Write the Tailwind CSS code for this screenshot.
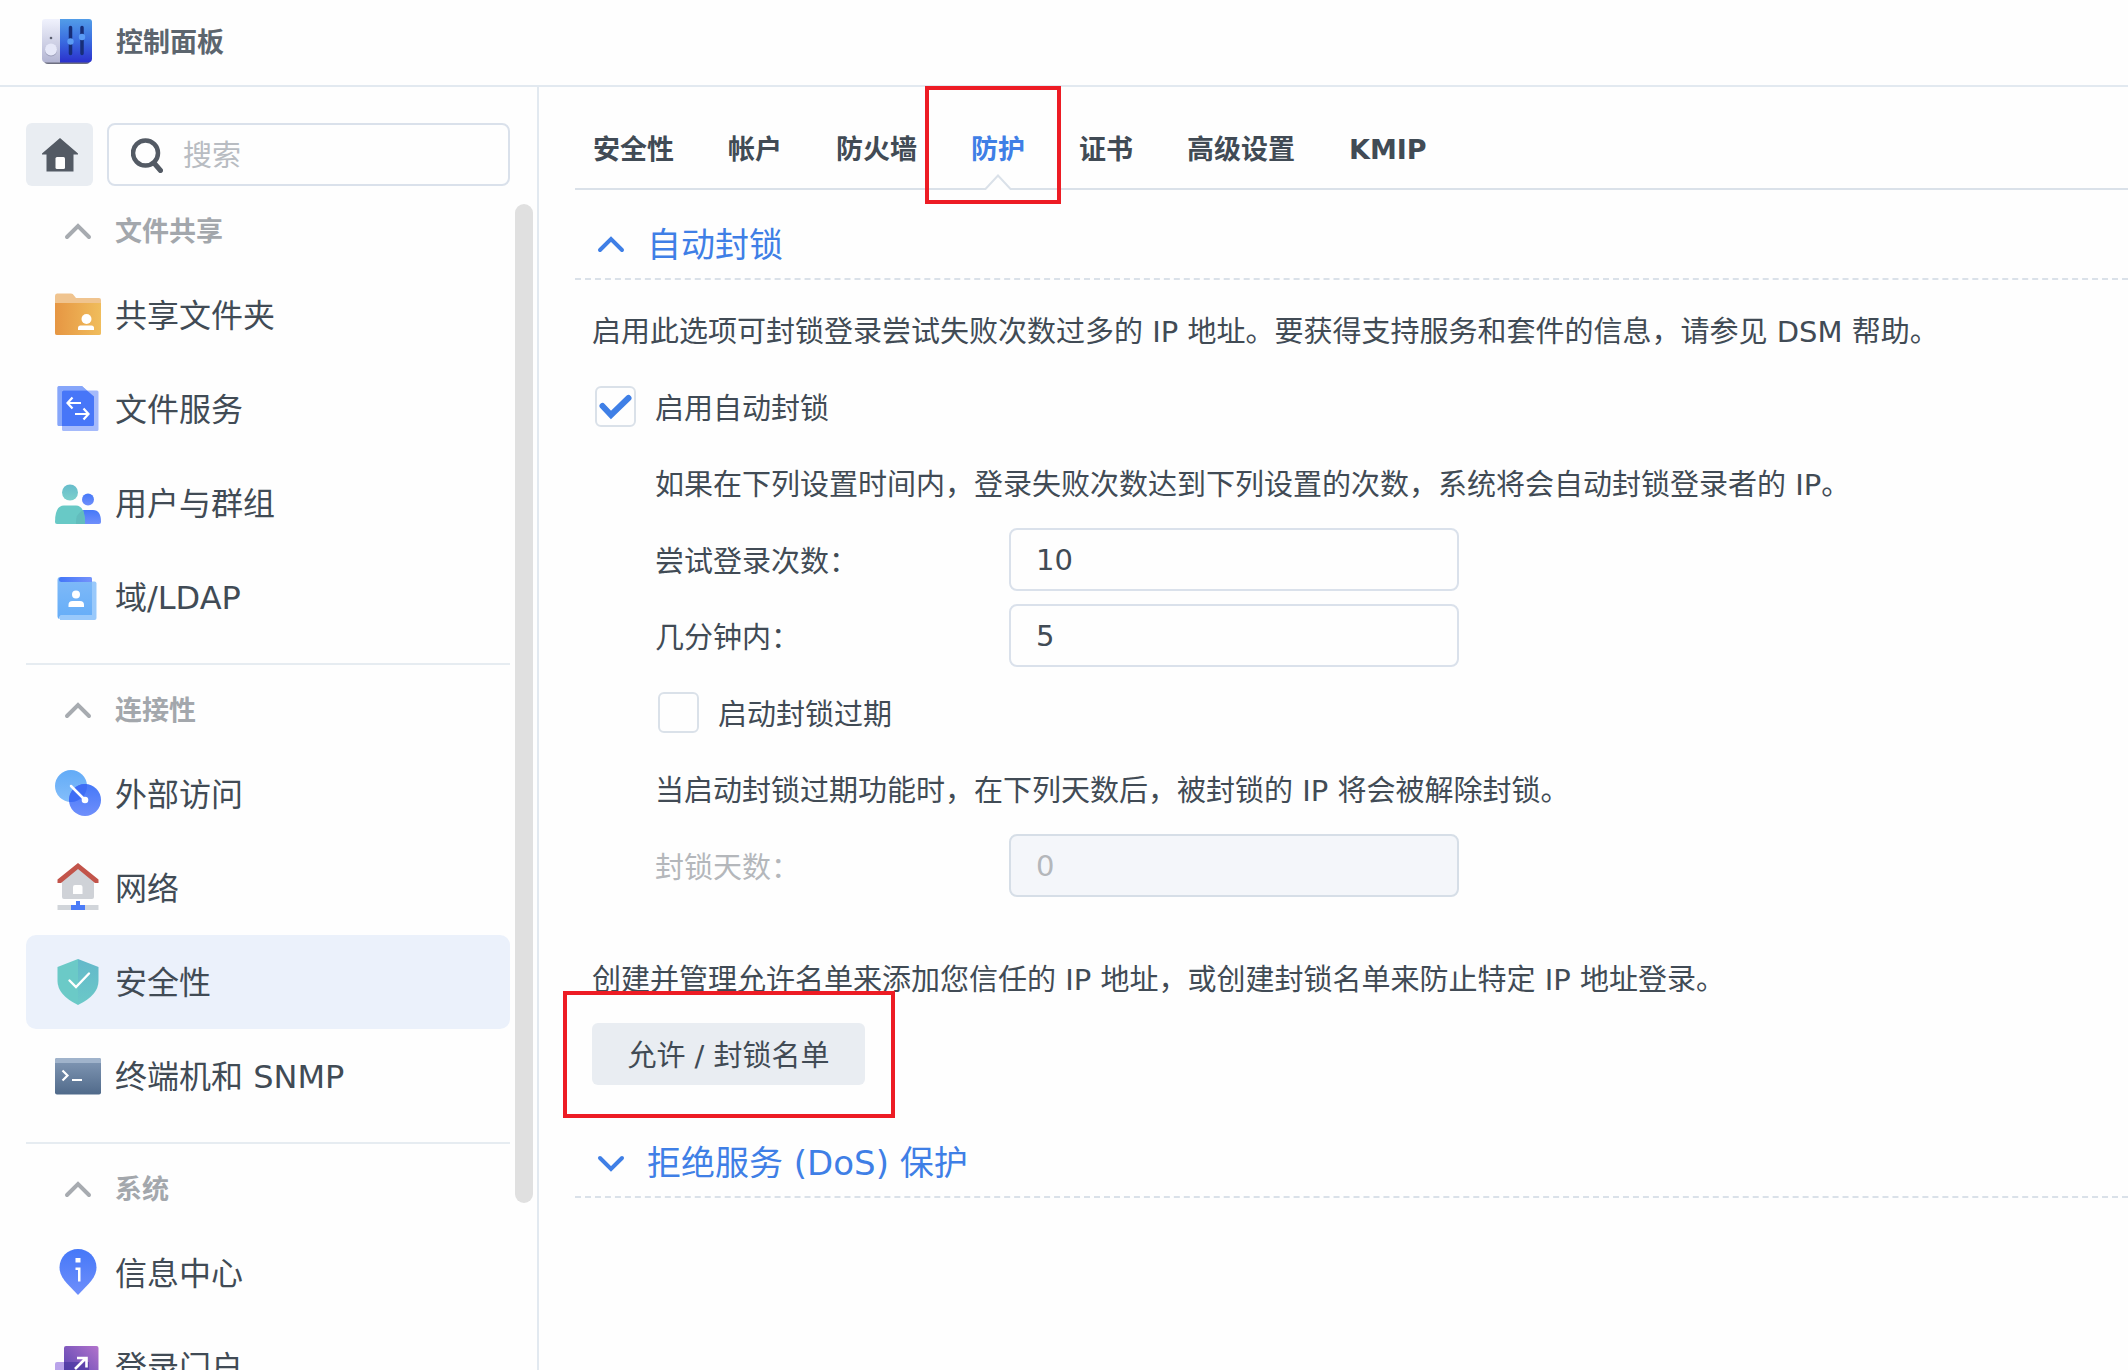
<!DOCTYPE html>
<html lang="zh-CN">
<head>
    <meta charset="UTF-8">
    <meta name="viewport" content="width=device-width, initial-scale=1.0">
    <title>控制面板</title>
    <script src="https://cdn.jsdelivr.net/npm/@tailwindcss/browser@4"></script>
</head>
<body class="flex h-screen flex-col overflow-hidden bg-[#fefefe] font-['DejaVu_Sans','Noto_Sans_CJK_SC',sans-serif] text-[29px] leading-[44px] text-[#414b55]">
    <!-- 标题栏 -->
    <header class="flex h-[87px] shrink-0 items-center gap-6 border-b-2 border-[#e2e9f0] pl-[42px]">
        <svg class="h-[50px] w-[50px]" viewBox="0 1 50 50" aria-hidden="true">
            <defs>
                <linearGradient id="cpLeft" x1="0" y1="0" x2="0" y2="1"><stop offset="0" stop-color="#f0f2fd"/><stop offset="1" stop-color="#b3b5d2"/></linearGradient>
                <linearGradient id="cpRight" x1="0" y1="0" x2="0" y2="1"><stop offset="0" stop-color="#529de8"/><stop offset=".5" stop-color="#3a6ce0"/><stop offset="1" stop-color="#2a30cc"/></linearGradient>
            </defs>
            <rect x="2" y="6" width="46" height="41" rx="4" fill="#6d6f80"/>
            <path d="M3 2h15v43.500H4a4 4 0 0 1-4-4V5a3 3 0 0 1 3-3z" fill="url(#cpLeft)"/>
            <path d="M18 2h29a3 3 0 0 1 3 3v36.500a4 4 0 0 1-4 4H18z" fill="url(#cpRight)"/>
            <circle cx="9" cy="33.500" r="6" fill="#9d9fba"/>
            <circle cx="9" cy="32.500" r="6" fill="#e6e8f8"/>
            <circle cx="9" cy="21" r="1.300" fill="#5b5f70"/>
            <path d="M28.500 10.500v26M40 10.500v26" stroke="#172e78" stroke-width="3.500" stroke-linecap="round"/>
            <circle cx="28.500" cy="24.500" r="3.200" fill="#5b9cf5"/>
            <circle cx="40" cy="20" r="3.200" fill="#5b9cf5"/>
        </svg>
        <h1 class="text-[27px] font-bold text-[#5c656e]">控制面板</h1>
    </header>

    <div class="flex min-h-0 flex-1">
        <!-- 侧边栏 -->
        <aside class="flex w-[539px] shrink-0 flex-col border-r-2 border-[#e2e9f0] pt-9 pl-[26px]">
            <div class="flex h-[63px] shrink-0 gap-[14px] pr-[27px]">
                <button type="button" aria-label="主页" class="flex w-[67px] items-center justify-center rounded-md bg-[#e9edf2]">
                    <svg class="h-9 w-9" viewBox="0 0 36 36" aria-hidden="true"><path d="M18 1 36 16.500V17.500H31.500V34.500H4.500V17.500H0V16.500z" fill="#535a64"/><path d="M13.500 21.500q0-1.500 1.500-1.500h6.500q1.500 0 1.500 1.500v9q0 1.500-1.500 1.500H15q-1.500 0-1.500-1.500z" fill="#fefefe"/></svg>
                </button>
                <label class="flex min-w-0 flex-1 items-center gap-5 rounded-lg border-2 border-[#dae1eb] pl-[22px]">
                    <svg class="h-9 w-8 shrink-0" viewBox="0 0 32 36" fill="none" stroke="#535a64" aria-hidden="true"><circle cx="14.500" cy="16" r="12.500" stroke-width="4.500"/><path d="M23 26l6.500 7.500" stroke-width="5" stroke-linecap="round"/></svg>
                    <input type="search" placeholder="搜索" aria-label="搜索" class="min-w-0 flex-1 bg-transparent pt-[2px] outline-none placeholder:text-[#b8bcc2]">
                </label>
            </div>
            <div class="flex min-h-0 flex-1 gap-[5px]">
                <nav class="flex w-[484px] flex-col overflow-hidden text-[32px]">
                    <section class="mb-[19px] shrink-0">
                        <h2 class="flex h-[82px] items-center gap-[23px] pt-[10px] pl-[38px] text-[27px] font-bold text-[#a3a7ac]">
                            <svg class="h-5 w-7" viewBox="0 0 28 20" fill="none" stroke="#a7abb0" stroke-width="4" stroke-linecap="round" aria-hidden="true"><path d="M3 15 14 4l11 11"/></svg>文件共享
                        </h2>
                        <a href="#" class="flex h-[94px] items-center gap-[14px] rounded-[10px] px-[29px]">
                            <svg class="h-[46px] w-[46px] overflow-visible" viewBox="0 0 46 46" aria-hidden="true">
                                <defs><linearGradient id="folder"><stop offset="0" stop-color="#e69643"/><stop offset="1" stop-color="#f0bd5c"/></linearGradient></defs>
                                <path d="M2 1.500h14q2 0 3 2l2 2.500h23q2 0 2 2v33q0 2-2 2H2q-2 0-2-2v-37q0-2.500 2-2.500z" fill="#f0c48f"/>
                                <path d="M0 11h46v30q0 2-2 2H2q-2 0-2-2z" fill="url(#folder)"/>
                                <circle cx="31.500" cy="27" r="5" fill="#fff"/><path d="M23 38v-2q0-2.500 2.500-2.500h11q2.500 0 2.500 2.500v2z" fill="#fff"/>
                            </svg>
                            <span class="pt-[2px]">共享文件夹</span>
                        </a>
                        <a href="#" class="flex h-[94px] items-center gap-[14px] rounded-[10px] px-[29px]">
                            <svg class="h-[46px] w-[46px] overflow-visible" viewBox="0 0 46 46" aria-hidden="true">
                                <path d="M4 0h23l5 4.500h10q1.500 0 1.500 1.500v37.500q0 1.500-1.500 1.500H8.500Q7 45 7 43.500V40H4q-1.500 0-1.500-1.500v-37Q2.500 0 4 0z" fill="#a5bafb"/>
                                <path d="M4 0h23l5 4.500H7V40H4q-1.500 0-1.500-1.500v-37Q2.500 0 4 0z" fill="#86a6fa"/>
                                <path d="M7 6q0-1.500 1.500-1.500H32l7 6V38.500q0 1.500-1.500 1.500H7z" fill="#4776f8"/>
                                <path d="M26 17H12.500m5-5.500-5 5.500 5 5.500M20 28h13.500m-5-5.500 5 5.500-5 5.500" fill="none" stroke="#fff" stroke-width="2.200"/>
                            </svg>
                            <span class="pt-[2px]">文件服务</span>
                        </a>
                        <a href="#" class="flex h-[94px] items-center gap-[14px] rounded-[10px] px-[29px]">
                            <svg class="h-[46px] w-[46px] overflow-visible" viewBox="0 0 46 46" aria-hidden="true">
                                <defs><linearGradient id="head" x1="0" y1="0" x2="0" y2="1"><stop offset="0" stop-color="#66bccb"/><stop offset="1" stop-color="#7dd0cc"/></linearGradient><linearGradient id="user" x1="0" y1="0" x2="0" y2="1"><stop offset="0" stop-color="#4578f8"/><stop offset="1" stop-color="#6f8ffb"/></linearGradient></defs>
                                <circle cx="33" cy="19.500" r="6" fill="url(#user)"/>
                                <path d="M20 42q0-12 9-12h9q8 0 8 12 0 2-2 2H20z" fill="url(#user)"/>
                                <circle cx="15" cy="12.500" r="8" fill="url(#head)"/>
                                <path d="M0 42q0-16.500 9-16.500h12Q30 25.500 30 44H2q-2 0-2-2z" fill="#68c9c6"/>
                                <path d="M21 44q-1-10 7-14 2 5 2 14z" fill="#62bdbd"/>
                            </svg>
                            <span class="pt-[2px]">用户与群组</span>
                        </a>
                        <a href="#" class="flex h-[94px] items-center gap-[14px] rounded-[10px] px-[29px]">
                            <svg class="h-[46px] w-[46px] overflow-visible" viewBox="0 0 46 46" aria-hidden="true">
                                <defs><linearGradient id="book" x1="0" y1="0" x2="0" y2="1"><stop offset="0" stop-color="#80baf8"/><stop offset="1" stop-color="#65adf8"/></linearGradient><linearGradient id="strip"><stop offset="0" stop-color="#4376f8"/><stop offset="1" stop-color="#7592fb"/></linearGradient></defs>
                                <path d="M5 7.500h34.500q2 0 2 2V44q0 2-2 2H5z" fill="#99c9fb"/>
                                <path d="M2.500 6q0-3 3-3H35q2 0 2 2v36H6q-1.500 0-1.500 4-2-.5-2-2.500z" fill="url(#book)"/>
                                <path d="M6.500 3H35q2 0 2 2v3H6.500a2.500 2.500 0 0 1 0-5z" fill="url(#strip)"/>
                                <circle cx="21" cy="20.500" r="4" fill="#fff"/><path d="M13.500 33v-2q0-4 4-4H25q4 0 4 4v2z" fill="#fff"/>
                            </svg>
                            <span class="pt-[2px]">域/LDAP</span>
                        </a>
                    </section>
                    <section class="mb-[19px] shrink-0 border-t-2 border-[#e6ecf1]">
                        <h2 class="flex h-[82px] items-center gap-[23px] pt-[10px] pl-[38px] text-[27px] font-bold text-[#a3a7ac]">
                            <svg class="h-5 w-7" viewBox="0 0 28 20" fill="none" stroke="#a7abb0" stroke-width="4" stroke-linecap="round" aria-hidden="true"><path d="M3 15 14 4l11 11"/></svg>连接性
                        </h2>
                        <a href="#" class="flex h-[94px] items-center gap-[14px] rounded-[10px] px-[29px]">
                            <svg class="h-[46px] w-[46px] overflow-visible" viewBox="0 0 46 46" aria-hidden="true">
                                <defs><linearGradient id="sky" x1="0" y1="0" x2="0" y2="1"><stop offset="0" stop-color="#62abf7"/><stop offset="1" stop-color="#84befa"/></linearGradient><clipPath id="lens"><circle cx="16" cy="15" r="16"/></clipPath></defs>
                                <circle cx="16" cy="15" r="16" fill="url(#sky)"/>
                                <circle cx="30" cy="29" r="16" fill="url(#user)"/>
                                <circle cx="30" cy="29" r="16" fill="#3e6df5" clip-path="url(#lens)"/>
                                <path d="m16 15 14 14" stroke="#fff" stroke-width="2.500" stroke-linecap="round"/><circle cx="30" cy="29" r="3.300" fill="#fff"/>
                            </svg>
                            <span class="pt-[2px]">外部访问</span>
                        </a>
                        <a href="#" class="flex h-[94px] items-center gap-[14px] rounded-[10px] px-[29px]">
                            <svg class="h-[46px] w-[46px] overflow-visible" viewBox="0 0 46 46" aria-hidden="true">
                                <path fill-rule="evenodd" d="M23 3 39 16v16q0 2-2 2H9q-2 0-2-2V16zM18 22v7h9.500v-7q0-2-2-2H20q-2 0-2 2z" fill="#cfd2d7"/>
                                <path d="M23-2 43.500 14.500V18H40L23 4 6 18H2.500v-3.500z" fill="#c2544a"/>
                                <path d="M2.500 40h41v5h-41z" fill="#d1d5da"/><path d="M21 36h4v4h5v5H16v-5h5z" fill="#4a7bf7"/>
                            </svg>
                            <span class="pt-[2px]">网络</span>
                        </a>
                        <a href="#" aria-current="page" class="flex h-[94px] items-center gap-[14px] rounded-[10px] bg-[#ebf1fb] px-[29px]">
                            <svg class="h-[46px] w-[46px] overflow-visible" viewBox="0 0 46 46" aria-hidden="true">
                                <defs><linearGradient id="shield" x1="0" y1="0" x2="0" y2="1"><stop offset="0" stop-color="#63b8ca"/><stop offset="1" stop-color="#6bc9c8"/></linearGradient></defs>
                                <path d="M23 0v46Q2.500 36 2.500 22V8z" fill="#6bcac7"/>
                                <path d="M23 0v46q20.500-10 20.500-24V8z" fill="url(#shield)"/>
                                <path d="m14.500 21.500 6.500 6.500 13-13.500" fill="none" stroke="#fff" stroke-width="2.400" stroke-linecap="round"/>
                            </svg>
                            <span class="pt-[2px]">安全性</span>
                        </a>
                        <a href="#" class="flex h-[94px] items-center gap-[14px] rounded-[10px] px-[29px]">
                            <svg class="h-[46px] w-[46px] overflow-visible" viewBox="0 0 46 46" aria-hidden="true">
                                <defs><linearGradient id="term" x1="0" y1="0" x2="0" y2="1"><stop offset="0" stop-color="#8399b6"/><stop offset="1" stop-color="#506a8a"/></linearGradient></defs>
                                <rect y="5" width="46" height="36.500" rx="2" fill="url(#term)"/>
                                <path d="M0 10V7q0-2 2-2h42q2 0 2 2v3z" fill="#a0b3cb"/>
                                <path d="m7.500 17.500 5 5-5 5M17 27h10" fill="none" stroke="#fff" stroke-width="2.200"/>
                            </svg>
                            <span class="pt-[2px]">终端机和 SNMP</span>
                        </a>
                    </section>
                    <section class="shrink-0 border-t-2 border-[#e6ecf1]">
                        <h2 class="flex h-[82px] items-center gap-[23px] pt-[10px] pl-[38px] text-[27px] font-bold text-[#a3a7ac]">
                            <svg class="h-5 w-7" viewBox="0 0 28 20" fill="none" stroke="#a7abb0" stroke-width="4" stroke-linecap="round" aria-hidden="true"><path d="M3 15 14 4l11 11"/></svg>系统
                        </h2>
                        <a href="#" class="flex h-[94px] items-center gap-[14px] rounded-[10px] px-[29px]">
                            <svg class="h-[46px] w-[46px] overflow-visible" viewBox="0 0 46 46" aria-hidden="true">
                                <path d="M23-1C33-1 41.500 7 41.500 17.500 41.500 24 38 29 34 33.500L23 45 12 33.500C8 29 4.500 24 4.500 17.500 4.500 7 13-1 23-1z" fill="url(#user)"/>
                                <path d="M20.500 8h5v4.500h-5zM20.500 17.500h5v14H23V20h-2.500z" fill="#fff"/>
                            </svg>
                            <span class="pt-[2px]">信息中心</span>
                        </a>
                        <a href="#" class="flex h-[94px] items-center gap-[14px] rounded-[10px] px-[29px]">
                            <svg class="h-[46px] w-[46px] overflow-visible" viewBox="0 0 46 46" aria-hidden="true">
                                <defs><linearGradient id="portal" x1="0" y1="1" x2="1" y2="0"><stop offset="0" stop-color="#4f3fae"/><stop offset="1" stop-color="#b273cc"/></linearGradient></defs>
                                <rect y="18" width="34" height="28" rx="2" fill="#b9a3ea"/>
                                <rect x="9" y="2" width="34.500" height="36" rx="2" fill="url(#portal)"/>
                                <path d="M9 18h25v20H11q-2 0-2-2z" fill="#46339f" opacity=".6"/>
                                <path d="m20 25 11-11M22 14h9.500v9.500" fill="none" stroke="#fff" stroke-width="2.600"/>
                            </svg>
                            <span class="pt-[2px]">登录门户</span>
                        </a>
                    </section>
                </nav>
                <!-- 滚动条 -->
                <div class="mt-[18px] h-[999px] w-[18px] rounded-full bg-[#e0e0e0]"></div>
            </div>
        </aside>

        <!-- 内容区 -->
        <main class="min-w-0 flex-1 pl-9">
            <div role="tablist" class="flex h-[103px] gap-[54px] border-b-2 border-[#dae1e9] pl-[18px] text-[27px] font-bold">
                <button type="button" role="tab" class="pt-6">安全性</button>
                <button type="button" role="tab" class="pt-6">帐户</button>
                <button type="button" role="tab" class="pt-6">防火墙</button>
                <button type="button" role="tab" aria-selected="true" class="relative pt-6 text-[#3f7fe6]">防护
                    <svg class="absolute -bottom-[2px] left-1/2 h-4 w-7 -translate-x-1/2" viewBox="0 0 28 16" aria-hidden="true"><path d="M1 14h26v2H1z" fill="#fefefe"/><path d="M0 15h1.500L14 1.500 26.500 15H28" fill="#fefefe" stroke="#dae1e9" stroke-width="2"/></svg>
                    <span class="absolute -top-px -right-9 -bottom-4 -left-[46px] border-4 border-[#ed1c24]"></span>
                </button>
                <button type="button" role="tab" class="pt-6">证书</button>
                <button type="button" role="tab" class="pt-6">高级设置</button>
                <button type="button" role="tab" class="pt-6">KMIP</button>
            </div>

            <section>
                <h2 class="border-b-2 border-dashed border-[#dae1e9] text-[34px] text-[#3f7fe6]">
                    <button type="button" aria-expanded="true" class="flex h-[88px] items-center gap-[22px] pt-[22px] pl-[22px]">
                        <svg class="h-5 w-7" viewBox="0 0 28 20" fill="none" stroke="#3f7fe6" stroke-width="4" stroke-linecap="round" aria-hidden="true"><path d="M3 15 14 4l11 11"/></svg>自动封锁
                    </button>
                </h2>
                <div class="flex flex-col gap-[13px] pt-[18px] pb-[23px] pl-[17px]">
                    <div class="flex flex-col gap-[14px]">
                        <p class="flex h-[63px] items-center pt-1">启用此选项可封锁登录尝试失败次数过多的 IP 地址。要获得支持服务和套件的信息，请参见 DSM 帮助。</p>
                        <div class="flex h-[63px] items-center gap-[19px] pl-[3px]">
                            <span class="relative flex">
                                <input id="autoBlock" type="checkbox" checked class="peer h-[41px] w-[41px] appearance-none rounded-md border-2 border-[#dae1e9]">
                                <svg class="pointer-events-none absolute inset-0 hidden peer-checked:block" viewBox="0 0 41 41" fill="none" stroke="#3f7fe6" stroke-width="6" stroke-linecap="round" aria-hidden="true"><path d="m7.500 20 8.500 9 17.500-17"/></svg>
                            </span>
                            <label for="autoBlock" class="pt-1">启用自动封锁</label>
                        </div>
                    </div>
                    <div class="flex flex-col gap-[14px] pl-[63px]">
                        <p class="flex h-[63px] items-center pt-1">如果在下列设置时间内，登录失败次数达到下列设置的次数，系统将会自动封锁登录者的 IP。</p>
                        <div class="flex h-[63px] items-center">
                            <label for="attempts" class="w-[354px] pt-1">尝试登录次数：</label>
                            <input id="attempts" type="text" value="10" class="h-full w-[450px] rounded-lg border-2 border-[#dae1eb] px-[25px]">
                        </div>
                    </div>
                    <div class="flex flex-col gap-[14px] pl-[63px]">
                        <div class="flex h-[63px] items-center">
                            <label for="minutes" class="w-[354px] pt-1">几分钟内：</label>
                            <input id="minutes" type="text" value="5" class="h-full w-[450px] rounded-lg border-2 border-[#dae1eb] px-[25px]">
                        </div>
                        <div class="flex h-[63px] items-center gap-[19px] pl-[3px]">
                            <input id="expire" type="checkbox" class="h-[41px] w-[41px] appearance-none rounded-md border-2 border-[#dae1e9]">
                            <label for="expire" class="pt-1">启动封锁过期</label>
                        </div>
                    </div>
                    <div class="flex flex-col gap-[14px] pl-[63px]">
                        <p class="flex h-[63px] items-center pt-1">当启动封锁过期功能时，在下列天数后，被封锁的 IP 将会被解除封锁。</p>
                        <div class="flex h-[63px] items-center text-[#b4b7bb]">
                            <label for="days" class="w-[354px] pt-1">封锁天数：</label>
                            <input id="days" type="text" value="0" disabled class="h-full w-[450px] rounded-lg border-2 border-[#d6dee7] bg-[#f4f6fa] px-[25px]">
                        </div>
                    </div>
                    <p class="mt-9 flex h-16 items-center pt-1">创建并管理允许名单来添加您信任的 IP 地址，或创建封锁名单来防止特定 IP 地址登录。</p>
                    <div class="relative self-start">
                        <button type="button" class="flex h-[62px] w-[273px] items-center justify-center rounded-md bg-[#e9edf2] pt-1">允许 / 封锁名单</button>
                        <span class="pointer-events-none absolute -top-8 -right-[30px] -bottom-[33px] -left-[29px] border-4 border-[#ed1c24]"></span>
                    </div>
                </div>
            </section>

            <section>
                <h2 class="border-b-2 border-dashed border-[#dae1e9] text-[34px] text-[#3f7fe6]">
                    <button type="button" aria-expanded="false" class="flex h-[88px] items-center gap-[22px] pt-[22px] pl-[22px]">
                        <svg class="h-5 w-7" viewBox="0 0 28 20" fill="none" stroke="#3f7fe6" stroke-width="4" stroke-linecap="round" aria-hidden="true"><path d="M3 5l11 11L25 5"/></svg>拒绝服务 (DoS) 保护
                    </button>
                </h2>
            </section>
        </main>
    </div>
</body>
</html>
